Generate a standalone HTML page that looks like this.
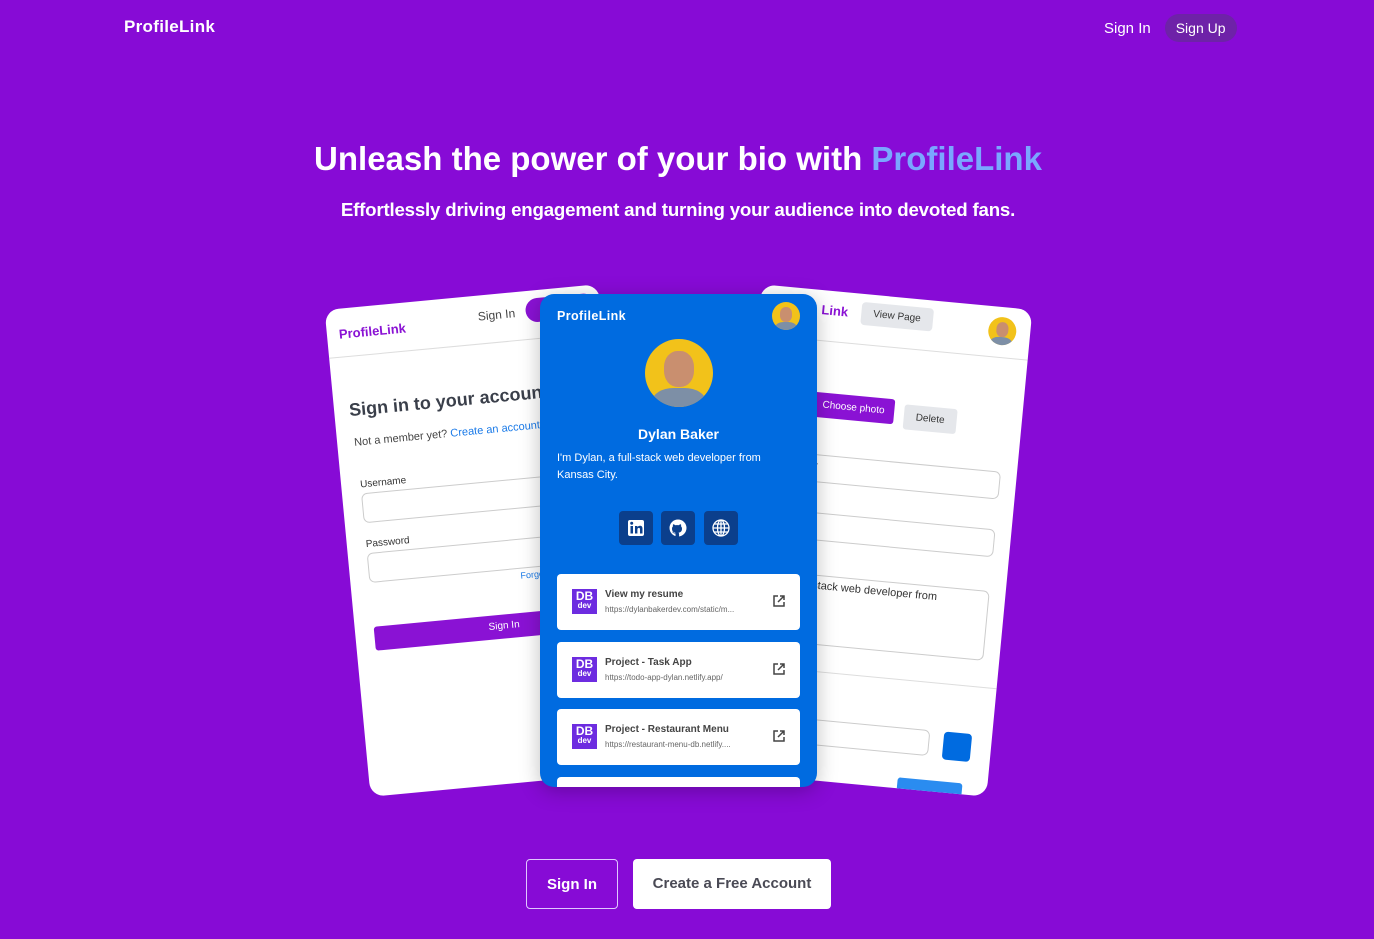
<!DOCTYPE html>
<html><head><meta charset="utf-8"><style>
*{box-sizing:border-box;margin:0;padding:0}
body{width:1374px;height:939px;overflow:hidden;background:#870bd6;font-family:"Liberation Sans",sans-serif;position:relative;color:#fff}
.logo{position:absolute;left:124px;top:17px;font-size:17px;font-weight:bold;letter-spacing:.3px}
.nav{position:absolute;top:14px;left:1104px;display:flex;gap:14px;align-items:center;font-size:15px}
.nav .up{background:#6e22a8;border-radius:16px;padding:6px 11px;font-size:14px}
h1{position:absolute;top:140px;left:0;width:1356px;text-align:center;font-size:33px;font-weight:bold}
h1 span{color:#7aa7ff}
.sub{position:absolute;top:199px;left:0;width:1356px;text-align:center;font-size:18.7px;font-weight:bold;letter-spacing:-.2px}
.card{position:absolute;background:#fff;border-radius:14px;overflow:hidden;color:#333}
.av{border-radius:50%;background:#f2c21a;position:relative;overflow:hidden}
.av:before{content:"";position:absolute;left:28%;top:18%;width:44%;height:52%;background:#c98f6f;border-radius:45%}
.av:after{content:"";position:absolute;left:10%;top:72%;width:80%;height:50%;background:#7d8fa6;border-radius:40%}
.in{border:1px solid #ccc;border-radius:6px;height:30px;position:absolute}
.link{position:absolute;left:17px;width:243px;height:56px;background:#fff;border-radius:4px;color:#333}
.db{position:absolute;left:15px;top:15px;width:25px;height:25px;background:#6d2ce0;color:#fff;font-size:12px;font-weight:bold;text-align:center;line-height:11px;padding-top:2px}
.db small{display:block;font-size:8px;line-height:8px}
.lt{position:absolute;left:48px;top:15px;font-size:10px;font-weight:bold;color:#444}
.lu{position:absolute;left:48px;top:31px;font-size:8px;color:#666;white-space:nowrap}
.ext{position:absolute;right:15px;top:21px}
.soc{position:absolute;top:511px;width:34px;height:34px;background:#0b3f8c;border-radius:4px}
.btn{position:absolute;top:859px;height:50px;border-radius:4px;font-size:15px;font-weight:bold;line-height:50px;text-align:center}
</style></head><body>
<div class="logo">ProfileLink</div>
<div class="nav"><span>Sign In</span><span class="up">Sign Up</span></div>
<h1>Unleash the power of your bio with <span>ProfileLink</span></h1>
<div class="sub">Effortlessly driving engagement and turning your audience into devoted fans.</div>

<div class="card" style="left:347px;top:296px;width:275px;height:489px;transform:rotate(-5.4deg)">
 <div style="position:absolute;left:12px;top:18px;color:#8a12d4;font-weight:bold;font-size:13px">ProfileLink</div>
 <div style="position:absolute;left:152px;top:14px;font-size:12px;color:#444">Sign In</div>
 <div style="position:absolute;left:200px;top:8px;width:70px;height:24px;background:#8a12d4;border-radius:12px"></div>
 <div style="position:absolute;left:0;top:48px;width:100%;border-top:1px solid #ddd"></div>
 <div style="position:absolute;left:15px;top:92px;font-size:18px;font-weight:bold;color:#3a3f4a;white-space:nowrap">Sign in to your account</div>
 <div style="position:absolute;left:17px;top:129px;font-size:11px;color:#444;white-space:nowrap">Not a member yet? <span style="color:#1a7ae8">Create an account</span></div>
 <div style="position:absolute;left:19px;top:172px;font-size:10px">Username</div>
 <div class="in" style="left:19px;top:186px;width:260px"></div>
 <div style="position:absolute;left:19px;top:232px;font-size:10px">Password</div>
 <div class="in" style="left:19px;top:246px;width:260px"></div>
 <div style="position:absolute;left:170px;top:278px;font-size:9px;color:#1a7ae8">Forgot</div>
 <div style="position:absolute;left:19px;top:320px;width:260px;height:24px;background:#8a12d4;color:#fff;font-size:10px;text-align:center;line-height:24px;border-radius:3px">Sign In</div>
</div>

<div class="card" style="left:738px;top:296px;width:272px;height:489px;transform:rotate(5.4deg)">
 <div style="position:absolute;left:62px;top:12px;color:#8a12d4;font-weight:bold;font-size:13px">Link</div>
 <div style="position:absolute;left:102px;top:8px;padding:6px 12px;background:#e5e7eb;border-radius:4px;font-size:10px">View Page</div>
 <div class="av" style="position:absolute;left:230px;top:10px;width:28px;height:28px"></div>
 <div style="position:absolute;left:0;top:50px;width:100%;border-top:1px solid #ddd"></div>
 <div style="position:absolute;left:62px;top:102px;padding:7px 10px;background:#8a12d4;color:#fff;border-radius:3px;font-size:10px">Choose photo</div>
 <div style="position:absolute;left:154px;top:106px;padding:7px 12px;background:#e5e7eb;border-radius:3px;font-size:10px">Delete</div>
 <div class="in" style="left:20px;top:164px;width:236px;height:28px;font-size:11px;padding:5px 5px 5px 42px">er</div>
 <div class="in" style="left:20px;top:222px;width:236px;height:28px"></div>
 <div class="in" style="left:20px;top:284px;width:236px;height:70px;font-size:11px;padding:4px 4px 4px 40px;white-space:nowrap">full-stack web developer from</div>
 <div style="position:absolute;left:0;top:380px;width:100%;border-top:1px solid #ddd"></div>
 <div class="in" style="left:20px;top:428px;width:190px;height:26px"></div>
 <div style="position:absolute;left:224px;top:428px;width:28px;height:28px;background:#006be0;border-radius:4px"></div>
 <div style="position:absolute;left:182px;top:478px;width:65px;height:20px;background:#2a8cf0;border-radius:3px"></div>
</div>

<div class="card" style="left:540px;top:294px;width:277px;height:493px;background:#006be0;color:#fff;box-shadow:0 4px 20px rgba(0,0,0,.25)">
 <div style="position:absolute;left:17px;top:15px;font-weight:bold;font-size:12.5px;letter-spacing:.4px">ProfileLink</div>
 <div class="av" style="position:absolute;left:232px;top:8px;width:28px;height:28px"></div>
 <div class="av" style="position:absolute;left:105px;top:45px;width:68px;height:68px"></div>
 <div style="position:absolute;top:132px;width:100%;text-align:center;font-weight:bold;font-size:14px">Dylan Baker</div>
 <div style="position:absolute;left:17px;top:156px;width:232px;font-size:11px;line-height:17px">I'm Dylan, a full-stack web developer from Kansas City.</div>
 <div class="link" style="top:280px"><div class="db">DB<small>dev</small></div><div class="lt">View my resume</div><div class="lu">https://dylanbakerdev.com/static/m...</div><svg class="ext" width="12" height="12" fill="none" stroke="#444" stroke-width="1.5"><path d="M5 1H1v10h10V7M7 1h4v4M11 1L5 7"/></svg></div>
 <div class="link" style="top:348px"><div class="db">DB<small>dev</small></div><div class="lt">Project - Task App</div><div class="lu">https://todo-app-dylan.netlify.app/</div><svg class="ext" width="12" height="12" fill="none" stroke="#444" stroke-width="1.5"><path d="M5 1H1v10h10V7M7 1h4v4M11 1L5 7"/></svg></div>
 <div class="link" style="top:415px"><div class="db">DB<small>dev</small></div><div class="lt">Project - Restaurant Menu</div><div class="lu">https://restaurant-menu-db.netlify....</div><svg class="ext" width="12" height="12" fill="none" stroke="#444" stroke-width="1.5"><path d="M5 1H1v10h10V7M7 1h4v4M11 1L5 7"/></svg></div>
 <div class="link" style="top:483px"></div>
</div>
<div class="soc" style="left:619px"><svg width="34" height="34"><rect x="9" y="9" width="16" height="16" rx="2" fill="#fff"/><rect x="11.5" y="15" width="2.5" height="7.5" fill="#0b3f8c"/><circle cx="12.7" cy="12.3" r="1.5" fill="#0b3f8c"/><path d="M16 15h2.4v1.2c.6-1 1.6-1.4 2.6-1.4 2 0 2.5 1.3 2.5 3.2v4.5H21v-4c0-1-.3-1.6-1.2-1.6s-1.4.7-1.4 1.6v4H16z" fill="#0b3f8c"/></svg></div>
<div class="soc" style="left:661px"><svg width="34" height="34"><circle cx="17" cy="17" r="8.5" fill="#fff"/><path d="M14.5 25.5v-3c-2.2 0-3-1-3.3-2 1 .3 1.4 1.5 2.5 1.5.6 0 .8-.3.8-.3-2.5-.5-3.5-1.8-3.5-4 0-1 .4-1.8 1-2.4-.2-.6-.2-1.4.1-2 .9 0 1.7.5 2.2 1 .9-.3 2.5-.3 3.4 0 .5-.5 1.3-1 2.2-1 .3.6.3 1.4.1 2 .6.6 1 1.4 1 2.4 0 2.2-1 3.5-3.5 4 .5.4.6 1 .6 1.6v3.2z" fill="#0b3f8c"/></svg></div>
<div class="soc" style="left:704px"><svg width="34" height="34" fill="none" stroke="#fff" stroke-width="1.3"><circle cx="17" cy="17" r="8"/><ellipse cx="17" cy="17" rx="3.5" ry="8"/><path d="M9 17h16M10 13h14M10 21h14M17 9v16"/></svg></div>

<div class="btn" style="left:526px;width:92px;border:1px solid #e0c8ff">Sign In</div>
<div class="btn" style="left:633px;width:198px;background:#fff;color:#4a4a55">Create a Free Account</div>
</body></html>
